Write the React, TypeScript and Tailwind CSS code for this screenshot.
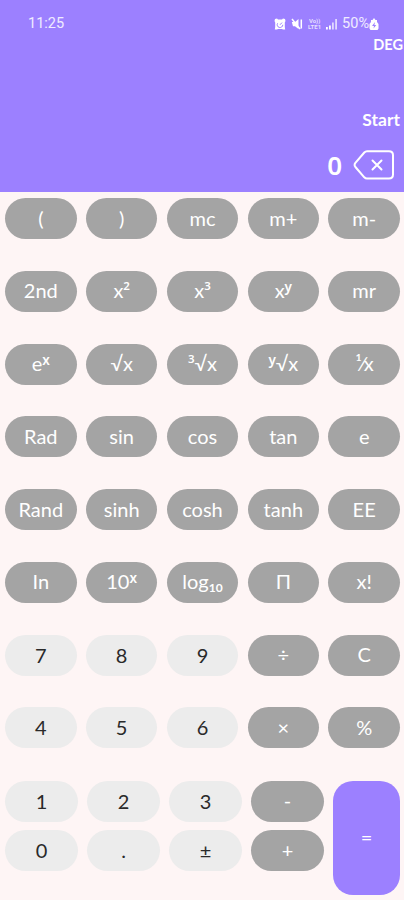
import type { ReactNode } from "react";

type KeyProps = {
  children: ReactNode;
  light?: boolean;
};

const scientificRows: ReactNode[][] = [
  ["(", ")", "mc", "m+", "m-"],
  ["2nd", <>x<Sup>2</Sup></>, <>x<Sup>3</Sup></>, <>x<Sup big>y</Sup></>, "mr"],
  [<>e<Sup big>x</Sup></>, "√x", <><Sup>3</Sup>√x</>, <><Sup big>y</Sup>√x</>, <span className="tracking-[-0.5px]">¹⁄x</span>],
  ["Rad", "sin", "cos", "tan", "e"],
  ["Rand", "sinh", "cosh", "tanh", "EE"],
  ["In", <>10<Sup big>x</Sup></>, <>log<Sub>10</Sub></>, "Π", "x!"],
  ["7", "8", "9", "÷", "C"],
  ["4", "5", "6", "×", "%"],
];

export default function App() {
  return (
    <main className="flex h-[900px] w-[404px] flex-col overflow-hidden bg-[#fef5f5] font-['Lato','Noto_Sans',sans-serif]">
      <Display />
      <div className="flex flex-col gap-[31.75px] pt-[6px] pl-[5px]">
        {scientificRows.map((row, i) => (
          <div key={i} className="grid h-[41px] w-[395px] grid-cols-5 gap-[9.2px]">
            {row.map((label, j) => (
              <Key key={j} light={i > 5 && j < 3}>
                {label}
              </Key>
            ))}
          </div>
        ))}
      </div>
      <BottomKeys />
    </main>
  );
}

function Display() {
  return (
    <header className="flex h-48 shrink-0 flex-col bg-[#9c80ff] text-white">
      <StatusBar />
      <p className="mt-[2px] pr-px text-right text-[14.5px] leading-[17px] font-bold">DEG</p>
      <p className="mt-[57px] pr-[4px] text-right text-[17.5px] leading-[20px] font-bold">Start</p>
      <div className="mt-[16px] flex h-[38px] items-center justify-end gap-[11px] pr-[9px]">
        <span className="font-['Noto_Sans',sans-serif] text-[26px] leading-[37px] font-semibold">0</span>
        <svg width="42" height="30" viewBox="0 0 42 30" fill="none" stroke="white" strokeWidth="2" strokeLinecap="round" strokeLinejoin="round">
          <path d="M14 1.2H36Q40 1.2 40 5.2V24.6Q40 28.6 36 28.6H14Q12.5 28.6 11.3 27.3L2.4 17Q0.8 14.9 2.4 12.8L11.3 2.5Q12.5 1.2 14 1.2Z" />
          <path d="M19.5 10.5L28.5 19.5M28.5 10.5L19.5 19.5" />
        </svg>
      </div>
    </header>
  );
}

function StatusBar() {
  return (
    <div className="flex h-[34px] items-center justify-between pt-[13px] pr-[25px] pl-[28px] font-['Roboto',sans-serif] text-[14.5px] leading-4 text-white/85">
      <span>11:25</span>
      <div className="flex items-center">
        {/* alarm */}
        <svg className="mr-[5px]" width="12" height="12" viewBox="0 0 12 12">
          <path d="M1 1L3 0.5L4 1.5H8L9 0.5L11 1L11.5 3L10.8 4.5V9L11.2 11.5H9L8 11H4L3 11.5H0.8L1.2 9V4.5L0.5 3Z" fill="white" />
          <path d="M6 6.8L8 4.6M3.6 5.3A2.8 2.8 0 1 0 8.8 6.8" fill="none" stroke="#9c80ff" strokeWidth="1" />
        </svg>
        {/* muted speaker */}
        <svg className="mr-[4px]" width="12" height="12" viewBox="0 0 12 12">
          <path d="M0.8 4H4L7.5 1V11L4 8.2H2Z" fill="white" />
          <path d="M1 1L9 11M10.3 1.5V10.5" fill="none" stroke="white" strokeWidth="1.5" />
        </svg>
        <span className="mr-[3px] flex w-[15px] flex-col items-center text-[6px] leading-[6px] font-bold text-white/75">
          <span>Vo))</span>
          <span>LTE1</span>
        </span>
        {/* signal strength */}
        <svg className="mr-[4px]" width="13" height="12" viewBox="0 0 13 12" fill="white">
          <path d="M1 9H2.8V11.5H1ZM4 7.5H5.8V11.5H4Z" />
          <path d="M7 4.5H8.8V11.5H7ZM10.2 1H12V11.5H10.2Z" opacity="0.7" />
        </svg>
        <span>50%</span>
        {/* charging battery */}
        <svg width="10" height="12" viewBox="0 0 10 12">
          <path d="M5 0L6.5 2H8V4L9.5 6V10.5L8.5 12H1.5L0.5 10.5V6L2 4V2H3.5Z" fill="white" />
          <path d="M6 4L3 8H5L4.5 10.5L7.3 7H5.4Z" fill="#9c80ff" />
        </svg>
      </div>
    </div>
  );
}

function BottomKeys() {
  return (
    <div className="mt-[32.5px] flex gap-[9px] pl-[5px]">
      <div className="grid h-[90.5px] w-[319px] grid-cols-4 grid-rows-2 gap-x-[9px] gap-y-[8.5px]">
        <Key light>1</Key>
        <Key light>2</Key>
        <Key light>3</Key>
        <Key>-</Key>
        <Key light>0</Key>
        <Key light>.</Key>
        <Key light>±</Key>
        <Key>+</Key>
      </div>
      <button className="h-[114px] w-[67px] rounded-[20px] bg-[#9c80ff] pb-[2px] text-[20px] text-white">=</button>
    </div>
  );
}

function Key({ children, light }: KeyProps) {
  return (
    <button
      className={
        light
          ? "flex items-center justify-center rounded-[20.5px] bg-[#ececec] pb-px text-[20px] leading-6 whitespace-nowrap text-[#2a2a2a]"
          : "flex items-center justify-center rounded-[20.5px] bg-[#a4a4a4] pb-[2px] text-[20px] leading-6 whitespace-nowrap text-white"
      }
    >
      <span>{children}</span>
    </button>
  );
}

function Sup({ children, big }: { children: ReactNode; big?: boolean }) {
  return (
    <sup
      className={
        big
          ? "top-[-6px] align-baseline font-['Noto_Sans',sans-serif] text-[13.5px] leading-none font-semibold"
          : "top-[-8px] align-baseline font-['Noto_Sans',sans-serif] text-[11.5px] leading-none font-semibold"
      }
    >
      {children}
    </sup>
  );
}

function Sub({ children }: { children: ReactNode }) {
  return <sub className="bottom-[-3px] align-baseline text-[12px] leading-none font-bold">{children}</sub>;
}
